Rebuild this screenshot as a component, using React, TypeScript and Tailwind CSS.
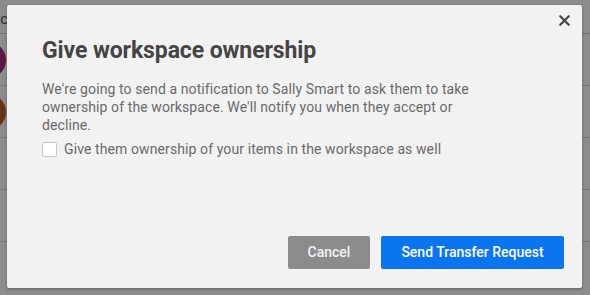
import { X } from "lucide-react";

const rows = [
  { avatar: "bg-[#a52a7e]" },
  { avatar: "bg-[#c25a2a]" },
  { avatar: null },
  { avatar: null },
];

export default function App() {
  return (
    <div className="relative w-[590px] h-[295px] overflow-hidden bg-white font-['Roboto',sans-serif]">
      {/* Page behind the modal */}
      <div className="flex flex-col">
        <div className="h-[34px] border-b border-[#d0d0d0] pt-[8px] text-[15px] text-[#555] -ml-[8px]">
          ac
        </div>
        {rows.map((r, i) => (
          <div key={i} className="h-[52px] border-b border-[#d6d6d6] flex items-center -ml-[30px]">
            {r.avatar && <div className={`w-[36px] h-[36px] rounded-full ${r.avatar}`} />}
          </div>
        ))}
      </div>

      {/* Backdrop */}
      <div className="absolute inset-0 bg-black/45" />

      {/* Dialog */}
      <div className="absolute left-[7px] top-[5px] w-[575px] h-[283px] bg-[#f2f2f2] rounded-[2px] shadow-[0_1px_3px_rgba(0,0,0,0.3)] flex flex-col px-[35px] pt-[31px] pb-[19px]">
        <button className="absolute right-[9px] top-[7px] text-[#444]">
          <X className="w-[17px] h-[17px]" strokeWidth={3} />
        </button>

        <h2 className="text-[23px] leading-[30px] font-bold text-[#454545] tracking-[-0.1px]">
          Give workspace ownership
        </h2>

        <p className="mt-[14px] text-[14px] leading-[18px] text-[#6a6a6a] tracking-[0.1px] w-[450px]">
          We're going to send a notification to Sally Smart to ask them to take ownership of the
          workspace. We'll notify you when they accept or decline.
        </p>

        <label className="mt-[5px] flex items-center gap-[7px] text-[14px] text-[#6a6a6a] tracking-[0.1px]">
          <span className="w-[15px] h-[15px] bg-white border border-[#c8c8c8] rounded-[2px]" />
          Give them ownership of your items in the workspace as well
        </label>

        <div className="mt-auto flex justify-end gap-[11px] -mr-[17px]">
          <button className="w-[82px] h-[33px] bg-[#8c8c8c] text-[#f2f2f2] text-[14px] font-medium rounded-[2px]">
            Cancel
          </button>
          <button className="w-[183px] h-[33px] bg-[#0b74ef] text-white text-[14px] font-medium rounded-[2px]">
            Send Transfer Request
          </button>
        </div>
      </div>
    </div>
  );
}
